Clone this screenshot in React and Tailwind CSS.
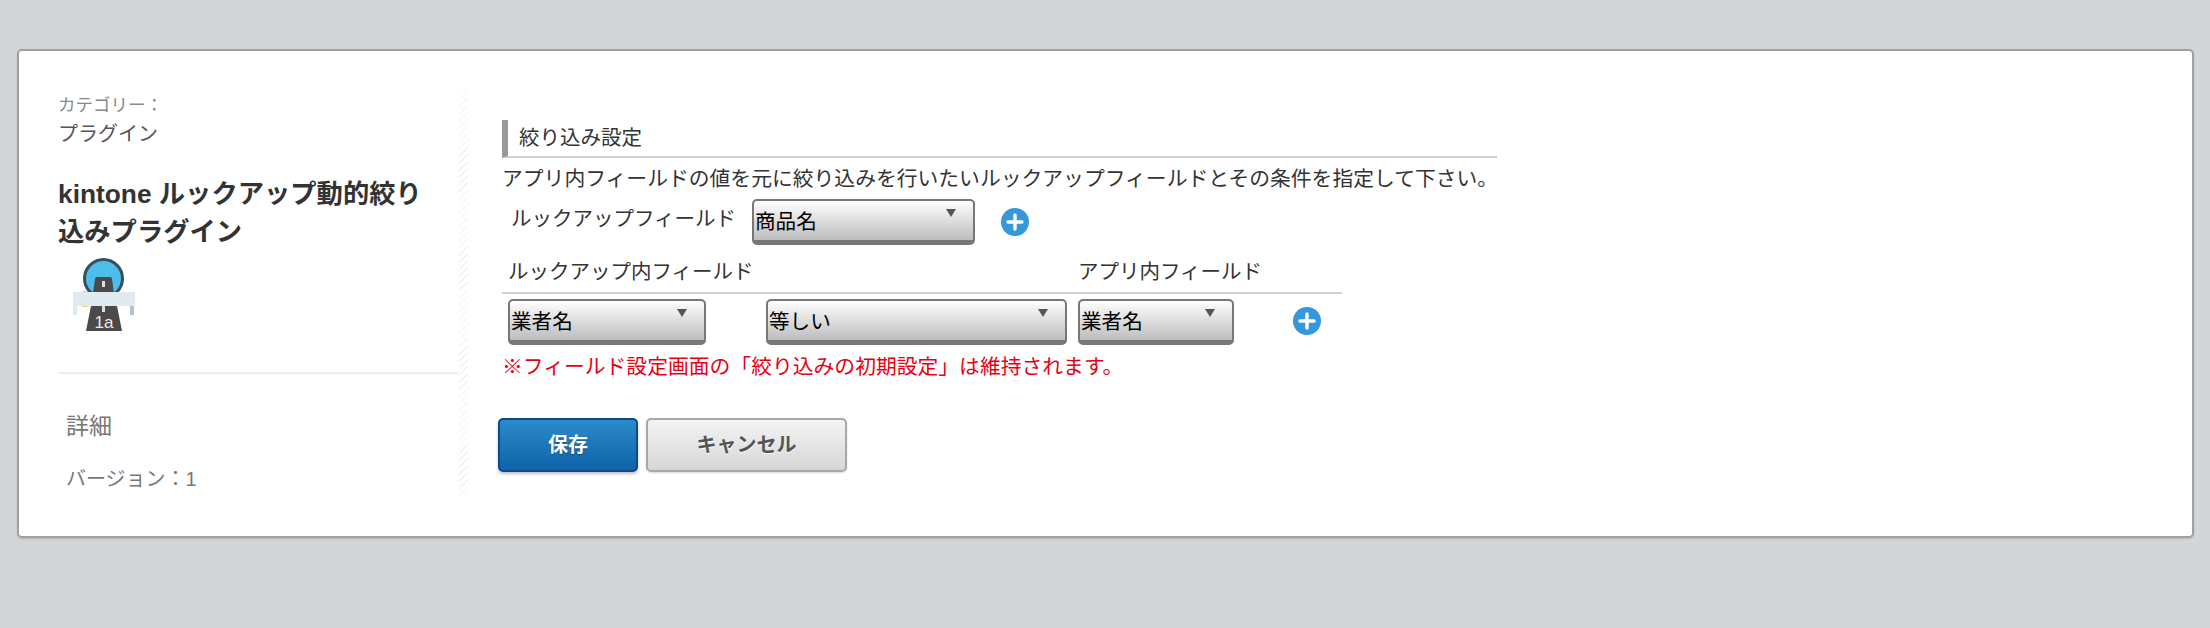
import React from "react";

const Arrow = () => (
  <svg width="12" height="10" viewBox="0 0 12 10" className="shrink-0">
    <path d="M1 1h10L6 9z" fill="#555" />
  </svg>
);

const Select = ({ label, className }) => (
  <div
    className={`flex h-[46px] items-start justify-between rounded-[5px] border-2 border-b-[5px] border-[#777] bg-gradient-to-b from-white to-[#bdbdbd] pl-[1px] ${className}`}
  >
    <span className="mt-[7px] text-[20.6px] leading-[28px] text-black">{label}</span>
    <span className="mt-[7px]">
      <Arrow />
    </span>
  </div>
);

const PlusIcon = ({ className }) => (
  <svg width="28" height="28" viewBox="0 0 28 28" className={className}>
    <circle cx="14" cy="14" r="14" fill="#3498db" />
    <path d="M14 7v14M7 14h14" stroke="#fff" strokeWidth="3.4" strokeLinecap="round" />
  </svg>
);

const PluginIcon = () => (
  <svg width="66" height="76" viewBox="0 0 66 76" className="ml-[14px] mt-[6px]">
    <circle cx="13" cy="42" r="8" fill="#f5c14e" />
    <circle cx="31.5" cy="21.5" r="19" fill="#4fbdea" stroke="#34505f" strokeWidth="3" />
    <path d="M23 22q0-2 2-2h13q2 0 2 2l2 14H21z" fill="#4a4a4a" />
    <path d="M19 49h26l5 25H14z" fill="#4a4a4a" />
    <rect x="1" y="35" width="62" height="14" fill="#dfebf1" />
    <rect x="1" y="49" width="4" height="9" fill="#dfebf1" />
    <rect x="58" y="49" width="4" height="9" fill="#b4c3cf" />
    <rect x="30" y="24" width="3" height="6" fill="#ddd" />
    <rect x="30" y="49" width="3" height="6" fill="#ddd" />
    <text x="32" y="71" textAnchor="middle" fontSize="17" fill="#eee" fontFamily="Liberation Sans">
      1a
    </text>
  </svg>
);

const App = () => {
  return (
    <div className="min-h-screen bg-[#d3d6d9] pl-[17px] pr-[16px] pt-[49px] [font-family:'Liberation_Sans','Noto_Sans_CJK_JP',sans-serif]">
      <div className="flex h-[489px] rounded-[5px] border-2 border-[#a0a0a0] bg-white pl-[39px] pt-[41px] shadow-[0_1px_2px_rgba(0,0,0,0.15)]">
        {/* Left column */}
        <div className="w-[400px] h-[405px] shrink-0">
          <p className="pt-[1px] text-[17.5px] leading-[24px] text-[#888]">カテゴリー：</p>
          <p className="mt-[3px] text-[20px] leading-[28px] text-[#555]">プラグイン</p>
          <h1 className="mt-[27px] pr-[20px] text-[26.3px] font-bold leading-[38px] text-[#333]">
            kintone ルックアップ動的絞り込みプラグイン
          </h1>
          <PluginIcon />
          <div className="mt-[39px] h-[2px] bg-[#eee]" />
          <div className="pl-[8px]">
            <p className="mt-[37px] text-[23px] leading-[30px] text-[#777]">詳細</p>
            <p className="mt-[24px] text-[20px] leading-[28px] text-[#777]">バージョン：1</p>
          </div>
        </div>

        {/* Hatched divider */}
        <div className="ml-[1px] h-[405px] w-[9px] shrink-0 bg-[repeating-linear-gradient(135deg,#f1f1f1_0,#f1f1f1_1px,transparent_1px,transparent_5px)]" />

        {/* Settings */}
        <div className="ml-[34px] w-[995px]">
          <h2 className="mt-[28px] h-[38px] border-b-2 border-l-[6px] border-b-[#d4d0cb] border-l-[#999] pl-[11px] text-[20.5px] leading-[36px] text-[#333]">
            絞り込み設定
          </h2>
          <p className="mt-[7px] whitespace-nowrap text-[20.8px] leading-[28px] text-[#333]">
            アプリ内フィールドの値を元に絞り込みを行いたいルックアップフィールドとその条件を指定して下さい。
          </p>
          <div className="mt-[6px] flex items-start">
            <span className="ml-[9px] mt-[6px] w-[241px] text-[20.5px] leading-[28px] text-[#333]">
              ルックアップフィールド
            </span>
            <Select label="商品名" className="w-[223px] pr-[16px]" />
            <PlusIcon className="ml-[26px] mt-[9px]" />
          </div>

          <div className="mt-[13px] flex h-[36px] w-[840px] items-start border-b-2 border-[#d4d0cb] text-[20.5px] leading-[28px] text-[#333]">
            <span className="ml-[6px] w-[570px]">ルックアップ内フィールド</span>
            <span>アプリ内フィールド</span>
          </div>
          <div className="mt-[5px] flex items-start">
            <Select label="業者名" className="ml-[6px] w-[198px] pr-[16px]" />
            <Select label="等しい" className="ml-[60px] w-[301px] pr-[16px]" />
            <Select label="業者名" className="ml-[11px] w-[156px] pr-[16px]" />
            <PlusIcon className="ml-[59px] mt-[8px]" />
          </div>
          <p className="mt-[8px] text-[20.8px] leading-[28px] text-[#e60012]">
            ※フィールド設定画面の「絞り込みの初期設定」は維持されます。
          </p>

          <div className="-ml-[1px] mt-[37px] flex gap-[8px]">
            <button className="-ml-[3px] h-[54px] w-[140px] rounded-[5px] border-2 border-[#0c4a8a] bg-gradient-to-b from-[#2a8bcb] to-[#0f63a8] text-[20px] font-bold text-white shadow-[0_2px_3px_rgba(0,0,0,0.25)] [text-shadow:0_1px_1px_rgba(0,0,0,0.4)]">
              保存
            </button>
            <button className="h-[54px] w-[201px] rounded-[5px] border-2 border-[#a8a8a8] bg-gradient-to-b from-[#f4f4f4] to-[#d6d6d6] text-[20px] font-bold text-[#555] shadow-[0_1px_2px_rgba(0,0,0,0.15)] [text-shadow:0_1px_0_#fff]">
              キャンセル
            </button>
          </div>
        </div>
      </div>
    </div>
  );
};

export default App;
